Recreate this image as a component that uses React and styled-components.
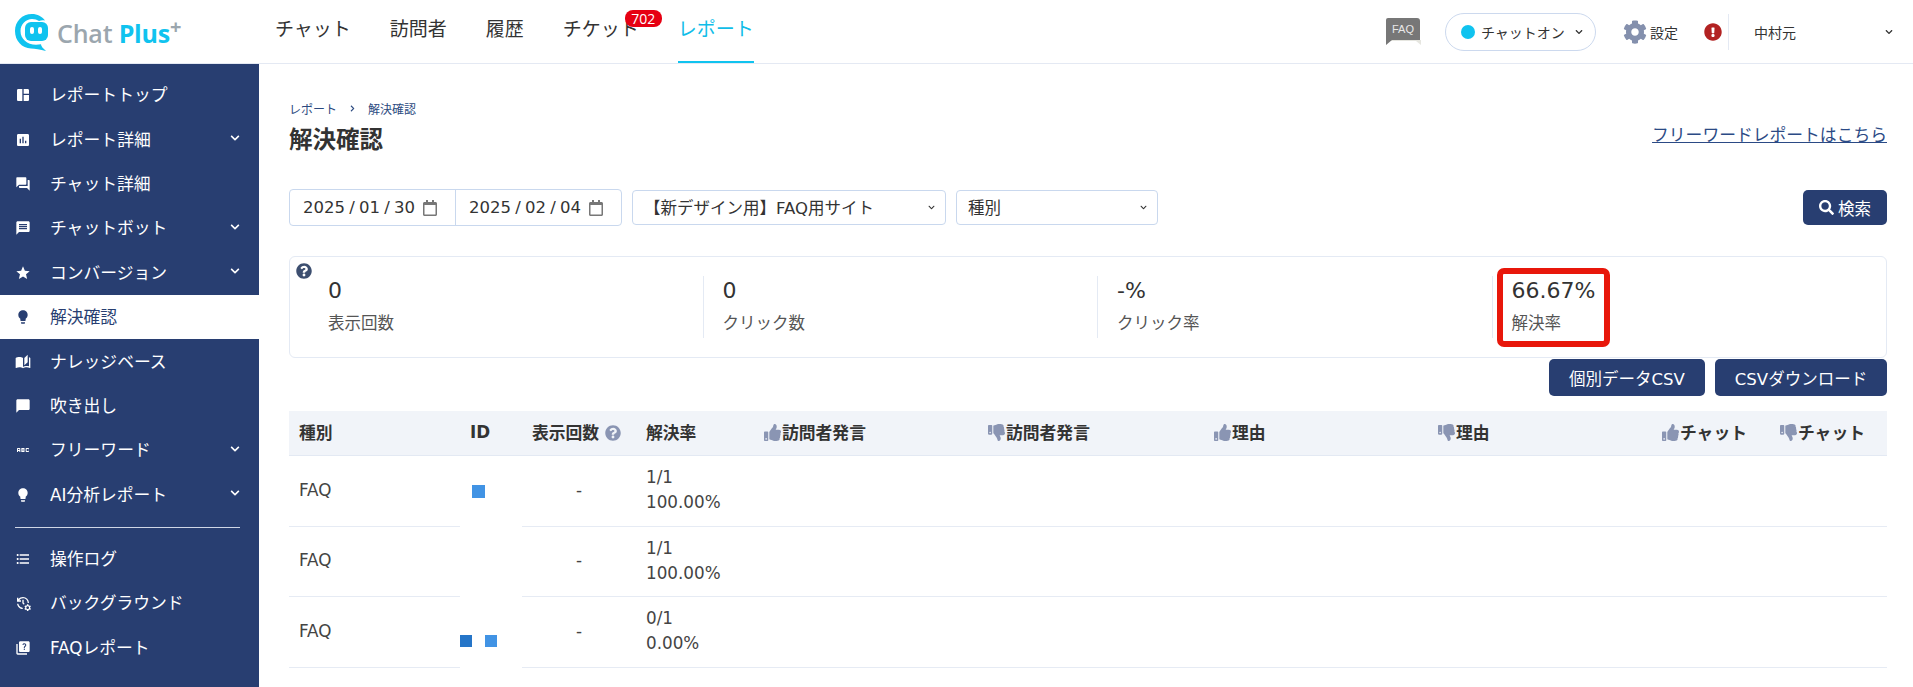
import React from "react";
import styled, { createGlobalStyle } from "styled-components";
import {
  MdSpaceDashboard, MdAssessment, MdForum, MdMessage, MdStar, MdLightbulb,
  MdAutoStories, MdChatBubble, MdAbc, MdFormatListBulleted, MdManageHistory, MdQuiz,
} from "react-icons/md";
import {
  FaChevronDown, FaChevronRight, FaCog, FaExclamationCircle, FaQuestionCircle,
  FaRegCalendar, FaSearch, FaThumbsUp, FaThumbsDown,
} from "react-icons/fa";

const NAVY = "#283e71";
const FONT = `"DejaVu Sans", "Noto Sans CJK JP", sans-serif`;

const GlobalStyle = createGlobalStyle`
  html, body { margin: 0; padding: 0; background: #fff; overflow: hidden; }
  body { font-family: ${FONT}; color: #333; }
  * { box-sizing: border-box; }
`;

const menu = [
  { label: "レポートトップ", icon: MdSpaceDashboard },
  { label: "レポート詳細", icon: MdAssessment, more: true },
  { label: "チャット詳細", icon: MdForum },
  { label: "チャットボット", icon: MdMessage, more: true },
  { label: "コンバージョン", icon: MdStar, more: true },
  { label: "解決確認", icon: MdLightbulb, active: true },
  { label: "ナレッジベース", icon: MdAutoStories },
  { label: "吹き出し", icon: MdChatBubble },
  { label: "フリーワード", icon: MdAbc, more: true },
  { label: "AI分析レポート", icon: MdLightbulb, more: true },
];
const menu2 = [
  { label: "操作ログ", icon: MdFormatListBulleted },
  { label: "バックグラウンド", icon: MdManageHistory },
  { label: "FAQレポート", icon: MdQuiz },
];
const stats = [
  { value: "0", label: "表示回数" },
  { value: "0", label: "クリック数" },
  { value: "-%", label: "クリック率" },
  { value: "66.67%", label: "解決率", marked: true },
];
const rows = [
  { rate: "1/1", pct: "100.00%", ids: ["#4193e4"] },
  { rate: "1/1", pct: "100.00%", ids: [] },
  { rate: "0/1", pct: "0.00%", ids: ["#2575c8", "#4193e4"], low: true },
];
const columnWidths = [171, 62, 114, 118, 224, 226, 224, 224, 118, 117];

function Logo() {
  return (
    <LogoWrap>
      <svg width="36" height="38" viewBox="0 0 36 38">
        <path fill="#10c3ef" d="M18 1C8 1 1 8.500 1 18c0 10 7 17 16 17.500 4 .2 9 1 15 2.500-3-3-5-4.500-5-6.800-1.500.3-3 .5-5 .5C13 31.700 6.500 26 6.500 18 6.500 11 12 6 18 6c3 0 5 .7 7 2 2-.8 4-1 6-.5C28 3.500 23.500 1 18 1z" />
        <rect x="11" y="9" width="23" height="19" rx="6" fill="#10c3ef" />
        <rect x="16" y="14" width="4" height="7" rx="2" fill="#fff" />
        <rect x="24" y="14" width="4" height="7" rx="2" fill="#fff" />
      </svg>
      <LogoText>Chat <b>Plus</b><sup>+</sup></LogoText>
    </LogoWrap>
  );
}

function FaqBubble() {
  return (
    <svg width="36" height="28" viewBox="0 0 36 28">
      <path fill="#e6e6e0" d="M2 22h34v5l-5-4H2z" />
      <path fill="#777" d="M3 0h29a3 3 0 0 1 3 3v19H7l-6 5V2a2 2 0 0 1 2-2z" />
      <text x="18" y="15" textAnchor="middle" fontSize="11" fill="#e8e8e8" fontFamily="Liberation Sans">FAQ</text>
    </svg>
  );
}

function SideItem({ item }) {
  const Icon = item.icon;
  return (
    <SideRow $active={item.active}>
      <IconBox><Icon size={item.icon === MdAbc ? 24 : 20} /></IconBox>
      <SideLabel>{item.label}</SideLabel>
      {item.more && <SideChevron><FaChevronDown size={10} /></SideChevron>}
    </SideRow>
  );
}

export default function App() {
  return (
    <>
      <GlobalStyle />
      <Page>
        <Header>
          <Logo />
          <Nav>
            <NavItem>チャット</NavItem>
            <NavItem>訪問者</NavItem>
            <NavItem>履歴</NavItem>
            <NavItem>チケット<Badge>702</Badge></NavItem>
            <NavItem $active>レポート</NavItem>
          </Nav>
          <HeaderRight>
            <FaqBubble />
            <Pill>
              <Dot />
              チャットオン
              <FaChevronDown size={8} color="#333" />
            </Pill>
            <Setting><FaCog size={24} color="#8490ad" />設定</Setting>
            <Alert><FaExclamationCircle size={18} color="#b22222" /></Alert>
            <UserBox>中村元<FaChevronDown size={8} color="#333" /></UserBox>
          </HeaderRight>
        </Header>
        <Body>
          <Sidebar>
            {menu.map((m) => <SideItem key={m.label} item={m} />)}
            <SideDivider />
            {menu2.map((m) => <SideItem key={m.label} item={m} />)}
          </Sidebar>
          <Main>
            <Breadcrumb>
              <span>レポート</span>
              <FaChevronRight size={7} />
              <span>解決確認</span>
            </Breadcrumb>
            <TitleRow>
              <Title>解決確認</Title>
              <FreeLink>フリーワードレポートはこちら</FreeLink>
            </TitleRow>
            <FilterRow>
              <DateGroup>
                <DateCell>2025 / 01 / 30<FaRegCalendar size={16} color="#777" /></DateCell>
                <DateCell>2025 / 02 / 04<FaRegCalendar size={16} color="#777" /></DateCell>
              </DateGroup>
              <SelectBox $width={314}><span>【新デザイン用】FAQ用サイト</span><FaChevronDown size={7} color="#333" /></SelectBox>
              <SelectBox $width={202}><span>種別</span><FaChevronDown size={7} color="#333" /></SelectBox>
              <SearchButton><FaSearch size={15} />検索</SearchButton>
            </FilterRow>
            <StatsCard>
              <HelpMark><FaQuestionCircle size={16} color="#3d4f70" /></HelpMark>
              {stats.map((s) => (
                <Stat key={s.label}>
                  <StatValue>{s.value}</StatValue>
                  <StatLabel>{s.label}</StatLabel>
                  {s.marked && <Marker />}
                </Stat>
              ))}
            </StatsCard>
            <ButtonRow>
              <ActionButton $width={156}>個別データCSV</ActionButton>
              <ActionButton $width={172}>CSVダウンロード</ActionButton>
            </ButtonRow>
            <Table>
              <colgroup>
                {columnWidths.map((w, i) => <col key={i} style={{ width: w }} />)}
              </colgroup>
              <thead>
                <tr>
                  <Th>種別</Th>
                  <Th>ID</Th>
                  <Th>表示回数 <HeadHelp><FaQuestionCircle size={16} /></HeadHelp></Th>
                  <Th>解決率</Th>
                  <Th><ThumbUp />訪問者発言</Th>
                  <Th><ThumbDown />訪問者発言</Th>
                  <Th><ThumbUp />理由</Th>
                  <Th><ThumbDown />理由</Th>
                  <Th><ThumbUp />チャット</Th>
                  <Th><ThumbDown />チャット</Th>
                </tr>
              </thead>
              <tbody>
                {rows.map((r, i) => (
                  <tr key={i}>
                    <Td>FAQ</Td>
                    <IdCell $low={r.low}>
                      <Squares $low={r.low}>
                        {r.ids.map((c, j) => <Square key={j} $color={c} $low={r.low} />)}
                      </Squares>
                    </IdCell>
                    <Td $center>-</Td>
                    <Td>{r.rate}<br />{r.pct}</Td>
                    <Td /><Td /><Td /><Td /><Td /><Td />
                  </tr>
                ))}
              </tbody>
            </Table>
          </Main>
        </Body>
      </Page>
    </>
  );
}

const Page = styled.div`
  width: 1913px;
  height: 687px;
  display: flex;
  flex-direction: column;
  overflow: hidden;
`;

const Header = styled.header`
  height: 64px;
  flex: none;
  display: flex;
  align-items: center;
  border-bottom: 1px solid #e4e9f3;
  background: #fff;
`;

const LogoWrap = styled.div`
  width: 275px;
  padding-left: 14px;
  display: flex;
  align-items: center;
  gap: 7px;
`;

const LogoText = styled.div`
  font-family: "Open Sans", sans-serif;
  font-size: 25px;
  font-weight: 600;
  letter-spacing: -0.2px;
  color: #9ba6ae;
  white-space: nowrap;
  margin-top: 2px;

  b { color: #10c3ef; font-weight: 700; }
  sup { color: #9ba6ae; font-size: 20px; font-weight: 700; line-height: 0; vertical-align: 9px; }
`;

const Nav = styled.nav`
  display: flex;
  gap: 39px;
  height: 63px;
`;

const NavItem = styled.div`
  position: relative;
  height: 63px;
  padding-top: 15px;
  font-size: 19px;
  line-height: 28px;
  white-space: nowrap;
  color: ${(p) => (p.$active ? "#10bde8" : "#333")};
  border-bottom: 2px solid ${(p) => (p.$active ? "#10c3ef" : "transparent")};
`;

const Badge = styled.span`
  position: absolute;
  top: 10px;
  right: -23px;
  width: 37px;
  height: 17px;
  border-radius: 8px;
  background: #e60012;
  color: #fff;
  font-family: "Open Sans", sans-serif;
  font-size: 14px;
  line-height: 17px;
  text-align: center;
`;

const HeaderRight = styled.div`
  margin-left: auto;
  display: flex;
  align-items: center;
  padding-right: 20px;
`;

const Pill = styled.div`
  width: 151px;
  height: 38px;
  margin-left: 24px;
  padding-left: 15px;
  display: flex;
  align-items: center;
  font-size: 14px;
  white-space: nowrap;
  border: 1px solid #ccd9ee;
  border-radius: 19px;
  svg { margin-left: 10px; }
`;

const Dot = styled.span`
  width: 14px;
  height: 14px;
  margin-right: 6px;
  border-radius: 50%;
  background: #10c3ef;
`;

const Setting = styled.div`
  margin-left: 27px;
  display: flex;
  align-items: center;
  gap: 3px;
  font-size: 14px;
`;

const Alert = styled.div`
  margin-left: 26px;
  display: flex;
`;

const UserBox = styled.div`
  width: 165px;
  height: 36px;
  margin-left: 6px;
  padding: 0 0 0 25px;
  display: flex;
  align-items: center;
  justify-content: space-between;
  font-size: 14px;
  border-left: 1px solid #e4e9f3;
`;

const Body = styled.div`
  flex: 1;
  display: flex;
  min-height: 0;
`;

const Sidebar = styled.aside`
  width: 259px;
  flex: none;
  padding-top: 9px;
  background: ${NAVY};
`;

const SideRow = styled.div`
  height: 44.4px;
  padding-left: 15px;
  padding-right: 19px;
  display: flex;
  align-items: center;
  font-size: 16.8px;
  white-space: nowrap;
  background: ${(p) => (p.$active ? "#fff" : "transparent")};
  color: ${(p) => (p.$active ? NAVY : "#fff")};
`;

const IconBox = styled.span`
  width: 16px;
  margin-right: 19px;
  display: flex;
  justify-content: center;
`;

const SideLabel = styled.span`
  margin-top: -2px;
`;

const SideChevron = styled.span`
  margin-left: auto;
  margin-top: -3px;
  display: flex;
`;

const SideDivider = styled.div`
  height: 1px;
  margin: 10px 19px 9px 15px;
  background: #cfd6e6;
`;

const Main = styled.main`
  flex: 1;
  min-width: 0;
  padding: 36px 26px 0 30px;
`;

const Breadcrumb = styled.div`
  display: flex;
  align-items: center;
  gap: 12px;
  height: 16px;
  font-size: 12px;
  color: #2c4a80;
`;

const TitleRow = styled.div`
  display: flex;
  justify-content: space-between;
  align-items: center;
  height: 40px;
  margin-top: 2px;
`;

const Title = styled.h1`
  margin: 0;
  font-size: 23.5px;
  font-weight: 700;
  color: #333;
`;

const FreeLink = styled.a`
  font-size: 16.8px;
  color: #2b4a85;
  text-decoration: underline;
  margin-top: -8px;
`;

const FilterRow = styled.div`
  display: flex;
  align-items: center;
  height: 37px;
  margin-top: 31px;
  gap: 10px;
`;

const DateGroup = styled.div`
  display: flex;
  width: 333px;
  height: 37px;
  border: 1px solid #c9d8ee;
  border-radius: 4px;
`;

const DateCell = styled.div`
  flex: 1;
  display: flex;
  align-items: center;
  gap: 7px;
  padding-left: 13px;
  font-size: 16.5px;
  word-spacing: -1px;
  white-space: nowrap;
  & + & { border-left: 1px solid #c9d8ee; }
`;

const SelectBox = styled.div`
  width: ${(p) => p.$width}px;
  height: 35px;
  padding: 0 10px 0 11px;
  display: flex;
  align-items: center;
  justify-content: space-between;
  font-size: 16.5px;
  white-space: nowrap;
  border: 1px solid #c9d8ee;
  border-radius: 4px;
  span { margin-top: -2px; }
`;

const SearchButton = styled.button`
  margin-left: auto;
  width: 84px;
  height: 35px;
  display: flex;
  align-items: center;
  justify-content: center;
  gap: 4px;
  border: 0;
  border-radius: 5px;
  background: ${NAVY};
  color: #fff;
  font-family: inherit;
  font-size: 16.5px;
`;

const StatsCard = styled.section`
  position: relative;
  display: flex;
  height: 102px;
  margin-top: 30px;
  padding: 19px 0 0 19px;
  border: 1px solid #e4eaf4;
  border-radius: 6px;
`;

const HelpMark = styled.span`
  position: absolute;
  top: 6px;
  left: 6px;
  display: flex;
`;

const Stat = styled.div`
  position: relative;
  flex: 1;
  height: 62px;
  padding-left: 19px;
  & + & { border-left: 1px solid #e4eaf4; }
`;

const StatValue = styled.div`
  font-size: 22px;
  line-height: 32px;
  margin-top: -1px;
`;

const StatLabel = styled.div`
  font-size: 16.5px;
  line-height: 24px;
  margin-top: 5px;
  color: #555;
`;

const Marker = styled.span`
  position: absolute;
  top: -8px;
  left: 4px;
  width: 113px;
  height: 79px;
  border: 6px solid #e8170b;
  border-radius: 7px;
`;

const ButtonRow = styled.div`
  display: flex;
  justify-content: flex-end;
  gap: 10px;
  margin-top: 1px;
`;

const ActionButton = styled.button`
  width: ${(p) => p.$width}px;
  height: 37px;
  padding: 0;
  border: 0;
  border-radius: 5px;
  background: ${NAVY};
  color: #fff;
  font-family: inherit;
  font-size: 16.5px;
  white-space: nowrap;
`;

const Table = styled.table`
  width: 100%;
  margin-top: 15px;
  table-layout: fixed;
  border-collapse: separate;
  border-spacing: 0;
`;

const Th = styled.th`
  height: 45px;
  padding: 0 0 3px 10px;
  background: #f1f4f9;
  border-bottom: 1px solid #e3e9f3;
  text-align: left;
  font-size: 16.8px;
  font-weight: 700;
  white-space: nowrap;
  color: #333;
  svg { vertical-align: -2px; }
`;

const HeadHelp = styled.span`
  color: #8a95b3;
`;

const Thumb = styled.span`
  color: #8a95b3;
  margin-right: 1px;
  svg { vertical-align: -2px; }
`;

const ThumbUp = () => <Thumb><FaThumbsUp size={17} /></Thumb>;
const ThumbDown = () => <Thumb><FaThumbsDown size={17} /></Thumb>;

const Td = styled.td`
  height: 70.6px;
  padding: 0 0 1px ${(p) => (p.$center ? 0 : 10)}px;
  border-bottom: 1px solid #e6ebf4;
  font-size: 16.8px;
  line-height: 25px;
  color: #444;
  text-align: ${(p) => (p.$center ? "center" : "left")};
`;

// the ID cell hides its row line, and the white patch runs a little into the next column
const IdCell = styled.td`
  position: relative;
  padding: 0;
  vertical-align: top;
  &::after {
    content: "";
    position: absolute;
    left: 0;
    right: -24px;
    bottom: -1px;
    height: 1px;
    background: ${(p) => (p.$low ? "transparent" : "#fff")};
  }
`;

const Squares = styled.div`
  display: flex;
  gap: 13px;
  padding-top: ${(p) => (p.$low ? 38 : 29)}px;
  padding-left: ${(p) => (p.$low ? 0 : 12)}px;
`;

const Square = styled.span`
  width: ${(p) => (p.$low ? 12 : 13)}px;
  height: ${(p) => (p.$low ? 12 : 13)}px;
  background: ${(p) => p.$color};
`;
